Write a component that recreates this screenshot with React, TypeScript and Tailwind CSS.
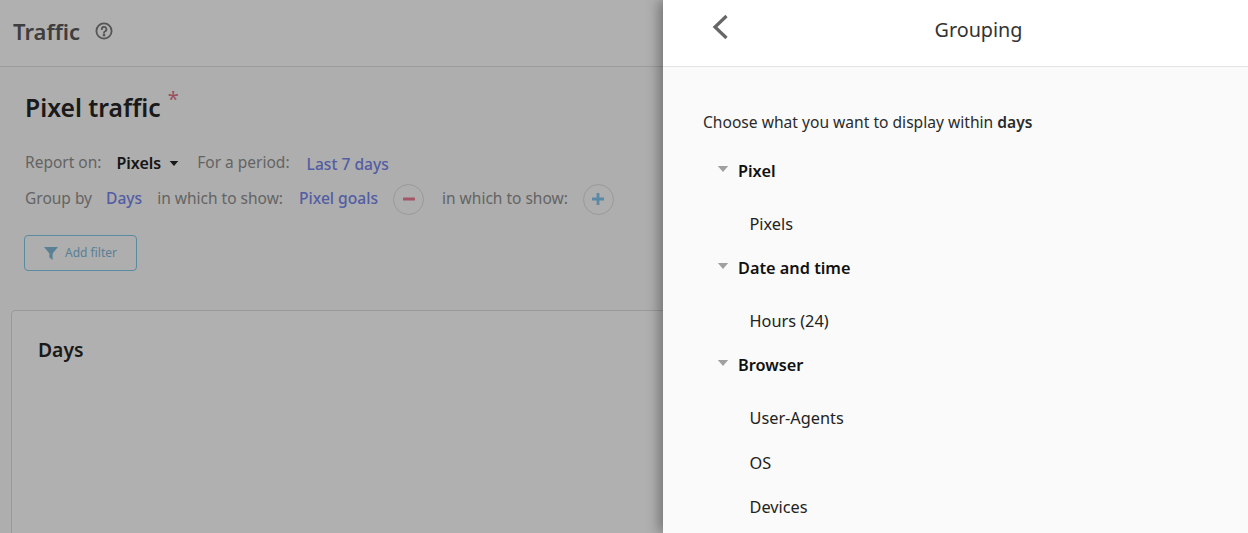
const GROUPS = [
  { title: "Pixel", items: ["Pixels"] },
  { title: "Date and time", items: ["Hours (24)"] },
  { title: "Browser", items: ["User-Agents", "OS", "Devices"] },
];

const Caret = ({ className }: { className: string }) => (
  <svg viewBox="0 0 12 7" className={className} fill="currentColor">
    <path d="M0 0h12L6 7z" />
  </svg>
);

const RoundButton = ({ color, plus }: { color: string; plus?: boolean }) => (
  <button className="w-[31px] h-[31px] rounded-full border border-[#dcdcdc] flex items-center justify-center">
    <svg viewBox="0 0 12 12" className={`w-[12px] h-[12px] ${color}`} fill="currentColor">
      <rect x="0" y="4.6" width="12" height="2.8" rx="0.5" />
      {plus && <rect x="4.6" y="0" width="2.8" height="12" rx="0.5" />}
    </svg>
  </button>
);

export default function App() {
  return (
    <div className="relative w-[1248px] h-[533px] overflow-hidden bg-[#f9f9f9] font-['Noto_Sans',sans-serif]">
      {/* Page under the overlay */}
      <div className="h-[67px] bg-[#fcfcfc] border-b border-[#e0e0e0] flex items-center pl-[13px] pb-[4px]">
        <h1 className="text-[22px] font-semibold text-[#5a5a5a]">Traffic</h1>
        <svg viewBox="0 0 18 18" className="w-[18px] h-[18px] ml-[15px] text-[#7a7a7a]" fill="none" stroke="currentColor" strokeWidth="1.8" strokeLinecap="round">
          <circle cx="9" cy="9" r="7.6" />
          <path d="M6.8 7.2a2.3 2.3 0 1 1 3.4 2c-.8.4-1.2.8-1.2 1.6" />
          <circle cx="9" cy="13.2" r="0.5" fill="currentColor" />
        </svg>
      </div>

      <div className="pl-[25px] pt-[22px]">
        <div className="flex items-start h-[36px]">
          <h2 className="mt-px text-[24.7px] leading-[36px] font-semibold text-[#262626]">Pixel traffic</h2>
          <span className="ml-[7px] text-[20px] leading-[20px] text-[#e0708a]">*</span>
        </div>

        <div className="flex items-center h-[22px] mt-[27px] text-[15.5px] text-[#8f8f8f]">
          <span>Report on:</span>
          <span className="ml-[15px] text-[16px] font-semibold text-[#222]">Pixels</span>
          <Caret className="w-[10px] h-[5px] ml-[8px] text-[#222]" />
          <span className="ml-[18px]">For a period:</span>
          <span className="ml-[17px] mt-[3px] text-[15.6px] font-medium text-[#7886ea]">Last 7 days</span>
        </div>

        <div className="flex items-center h-[32px] mt-[9px] text-[15.5px] text-[#8f8f8f]">
          <span>Group by</span>
          <span className="ml-[14px] text-[15.6px] font-medium text-[#7886ea]">Days</span>
          <span className="ml-[15px]">in which to show:</span>
          <span className="ml-[16px] text-[15.6px] font-medium text-[#7886ea]">Pixel goals</span>
          <span className="ml-[15px]"><RoundButton color="text-[#e87d95]" /></span>
          <span className="ml-[18px]">in which to show:</span>
          <span className="ml-[15px]"><RoundButton color="text-[#80c4ec]" plus /></span>
        </div>

        <button className="mt-[20px] -ml-px w-[113px] h-[36px] rounded-[4px] border border-[#80c8ea] flex items-center justify-center gap-[7px] text-[12px] text-[#80b8d6]">
          <svg viewBox="0 0 14 14" className="w-[14px] h-[14px] text-[#80b8d6]" fill="currentColor">
            <path d="M0 1h14L8.6 7.6V14L5.4 11.6V7.6z" />
          </svg>
          Add filter
        </button>
      </div>

      <div className="mt-[39px] ml-[11px] h-[300px] bg-[#fcfcfc] border border-[#dcdcdc] rounded-[4px] pl-[26px] pt-[25px]">
        <h3 className="text-[19.3px] leading-[28px] font-semibold text-[#262626]">Days</h3>
      </div>

      {/* Dimming overlay */}
      <div className="absolute inset-0 bg-black/30" />

      {/* Grouping side panel */}
      <aside className="absolute top-0 right-0 bottom-0 w-[585px] bg-[#fafafa] shadow-[-4px_0_12px_rgba(0,0,0,0.35)]">
        <header className="relative h-[67px] bg-white border-b border-[#e4e4e4] flex items-center justify-center pb-[7px] pl-[46px]">
          <svg viewBox="0 0 16 26" className="absolute left-[49px] top-[14px] w-[16px] h-[26px] text-[#666]" fill="none" stroke="currentColor" strokeWidth="3.2">
            <path d="M14.5 2 3 13l11.5 11" />
          </svg>
          <span className="text-[19.8px] text-[#333]">Grouping</span>
        </header>

        <div className="pl-[40px] pt-[43px]">
          <p className="text-[15.6px] leading-[24px] text-[#2b2b2b]">
            Choose what you want to display within <b className="font-semibold">days</b>
          </p>
          <ul className="mt-[25px]">
            {GROUPS.map((g) => (
              <li key={g.title} className="mb-[20px]">
                <div className="flex items-center h-[24px]">
                  <Caret className="w-[12px] h-[6px] ml-[14px] mb-[4px] text-[#a0a0a0]" />
                  <span className="ml-[9px] text-[16.3px] font-semibold text-[#111]">{g.title}</span>
                </div>
                <div className="mt-[29px] flex flex-col gap-[20.5px] pl-[46.5px]">
                  {g.items.map((item) => (
                    <span key={item} className="h-[24px] leading-[24px] text-[16.3px] text-[#222]">{item}</span>
                  ))}
                </div>
              </li>
            ))}
          </ul>
        </div>
      </aside>
    </div>
  );
}
